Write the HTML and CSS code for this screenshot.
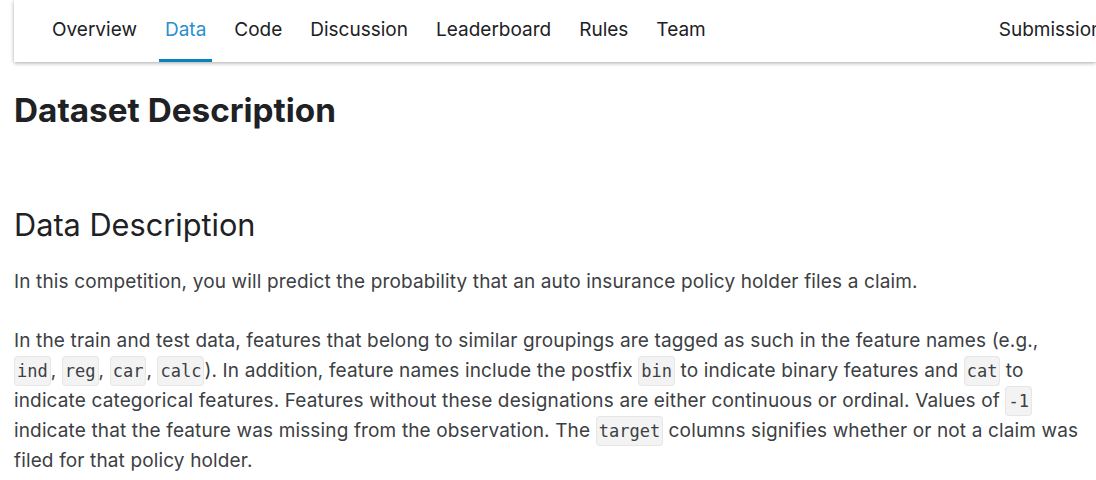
FILE: index.html
```html
<!DOCTYPE html>
<html lang="en">
<head>
    <meta charset="UTF-8">
    <title>Data</title>
    <link rel="stylesheet" href="styles.css">
</head>
<body>
    <!-- tab bar -->
    <nav class="tabs">
        <a class="tab">Overview</a>
        <a class="tab active">Data</a>
        <a class="tab">Code</a>
        <a class="tab">Discussion</a>
        <a class="tab">Leaderboard</a>
        <a class="tab">Rules</a>
        <a class="tab">Team</a>
        <a class="tab submissions">Submissions</a>
    </nav>

    <main class="content">
        <h1 class="page-title">Dataset Description</h1>
        <h2 class="section-title">Data Description</h2>
        <p>In this competition, you will predict the probability that an auto insurance policy holder files a claim.</p>
        <p>In the train and test data, features that belong to similar groupings are tagged as such in the feature names (e.g., <code>ind</code>, <code>reg</code>, <code>car</code>, <code>calc</code>). In addition, feature names include the postfix <code>bin</code> to indicate binary features and <code>cat</code> to indicate categorical features. Features without these designations are either continuous or ordinal. Values of <code>-1</code> indicate that the feature was missing from the observation. The <code>target</code> columns signifies whether or not a claim was filed for that policy holder.</p>
    </main>
</body>
</html>
```

FILE: styles.css
```css
body {
    margin: 0;
    font-family: Inter, "Noto Sans", sans-serif;
    background: #fff;
    color: #202124;
}

/* tab bar */
.tabs {
    display: flex;
    gap: 16px;
    margin-left: 14px;
    height: 62px;
    padding-left: 32px;
    background: #fff;
    box-shadow: 0 1px 4px rgba(0, 0, 0, 0.35);
    white-space: nowrap;
    overflow: hidden;
}

.tab {
    display: flex;
    align-items: center;
    padding: 0 6px 1px;
    font-size: 19px;
    color: #202124;
    border-bottom: 3px solid transparent;
}

.tab.active {
    color: #2a8fcc;
    border-bottom-color: #0a82bb;
}

.tab.submissions {
    margin-left: 265px;
}

/* content */
.content {
    padding: 0 14px;
}

.page-title {
    margin: 28px 0 0;
    font-size: 33.3px;
    font-weight: 700;
    line-height: 40px;
}

.section-title {
    margin: 77px 0 0;
    font-size: 30.7px;
    font-weight: 400;
    line-height: 36px;
}

p {
    margin: 24px 0 0;
    font-size: 19px;
    letter-spacing: 0.14px;
    line-height: 30px;
    color: #3c4043;
}

p + p {
    margin-top: 29px;
}

code {
    font-family: "DejaVu Sans Mono", monospace;
    font-size: 17px;
    letter-spacing: 0;
    line-height: 1;
    padding: 4px 2px;
    color: #3c4043;
    background: #f3f3f3;
    border: 1px solid #e6e6e6;
    border-radius: 4px;
}
```
